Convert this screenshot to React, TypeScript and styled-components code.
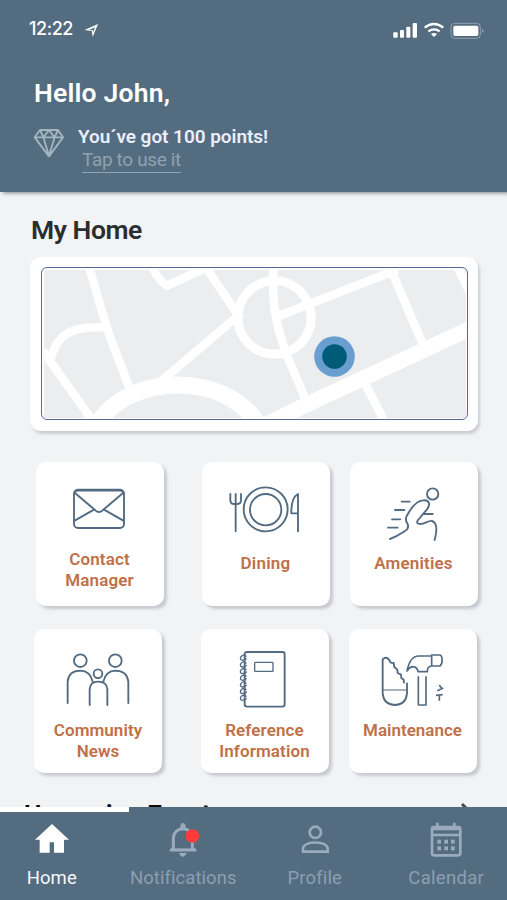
import React from 'react';
import styled, { createGlobalStyle } from 'styled-components';

const GlobalStyle = createGlobalStyle`
  * { box-sizing: border-box; }
  html, body { margin: 0; padding: 0; }
  body { font-family: Roboto, "Liberation Sans", sans-serif; background: #f1f3f5; }
  svg { display: block; }
`;

const Screen = styled.div`
  width: 507px;
  height: 900px;
  overflow: hidden;
  display: flex;
  flex-direction: column;
  background: #f1f3f5;
`;

const Header = styled.header`
  height: 192px;
  flex: none;
  background: #546c80;
  box-shadow: 3px 1px 4px rgba(60, 70, 80, 0.65);
`;

const StatusBar = styled.div`
  height: 58px;
  padding: 0 21px 0 29px;
  display: flex;
  align-items: center;
  color: #fff;
`;

const Clock = styled.span`
  font: 500 18px/22px Inter, sans-serif;
  letter-spacing: -0.45px;
  width: 55px;
`;

const LocationArrow = styled.svg`
  margin-top: 3px;
`;

const StatusIcons = styled.div`
  margin-left: auto;
  padding-top: 1px;
`;

const Greeting = styled.h1`
  margin: 19px 0 0 34px;
  font-size: 26.5px;
  line-height: 32px;
  font-weight: 600;
  letter-spacing: 0.2px;
  color: #fff;
`;

const Points = styled.div`
  display: flex;
  align-items: flex-start;
  margin: 15px 0 0 33px;
  & > svg { margin-top: 3px; }
`;

const PointsText = styled.div`
  margin-left: 14px;
`;

const PointsTitle = styled.div`
  margin-left: -1px;
  font-size: 19px;
  line-height: 25px;
  font-weight: 600;
  letter-spacing: -0.05px;
  color: #e9eeff;
`;

const PointsLink = styled.a`
  display: block;
  width: 99px;
  margin-left: 3px;
  height: 24px;
  font-size: 19px;
  line-height: 22px;
  letter-spacing: -0.35px;
  white-space: nowrap;
  color: #8fa2b2;
  border-bottom: 1px solid #91a6b5;
`;

const Content = styled.main`
  height: 615px;
  flex: none;
  overflow: hidden;
  padding-top: 22px;
`;

const SectionTitle = styled.h2<{ $dark?: boolean }>`
  margin: 0;
  font-size: 26.5px;
  line-height: 32px;
  font-weight: 600;
  letter-spacing: ${p => (p.$dark ? -0.5 : -0.45)}px;
  color: ${p => (p.$dark ? '#0b0b0b' : '#2b2d30')};
`;

const HomeTitle = styled(SectionTitle)`
  margin-left: 31px;
`;

const MapCard = styled.div`
  width: 448px;
  height: 174px;
  margin: 11px 0 31px 30px;
  padding: 10px 10px 11px 11px;
  border-radius: 11px;
  background: #fff;
  box-shadow: 2px 3px 3px rgba(90, 95, 105, 0.25);
`;

const MapFrame = styled.div`
  width: 427px;
  height: 153px;
  border: 1px solid #566799;
  border-radius: 6px;
  padding: 1.5px;
  overflow: hidden;
`;

const TileRow = styled.div<{ $left: number; $gap: number }>`
  display: flex;
  margin: 0 0 23px ${p => p.$left}px;
  & > :nth-child(2) { margin-left: ${p => p.$gap}px; }
  & > :nth-child(3) { margin-left: 20px; }
`;

const Tile = styled.button`
  width: 128px;
  height: 144px;
  flex: none;
  padding: 0;
  border: 0;
  border-radius: 10px;
  background: #fff;
  box-shadow: 3px 3px 3px rgba(90, 95, 110, 0.28);
  font-family: inherit;
  display: flex;
  flex-direction: column;
  align-items: center;
`;

const TileLabel = styled.span<{ $top: number; $spacing: number }>`
  margin-top: ${p => p.$top}px;
  font-size: 17px;
  line-height: 21px;
  font-weight: 600;
  letter-spacing: ${p => p.$spacing}px;
  white-space: pre-line;
  text-align: center;
  color: #bf7048;
`;

const EventsRow = styled.div`
  display: flex;
  align-items: flex-start;
  justify-content: space-between;
  padding: 2px 36px 0 24px;
`;

const NavBar = styled.nav`
  height: 93px;
  flex: none;
  background: #546c80;
`;

const ActiveStrip = styled.div`
  width: 129px;
  height: 5px;
  background: #fff;
`;

const NavItems = styled.div`
  display: grid;
  grid-template-columns: repeat(4, 131.5px);
  margin: 8px 0 0 -14px;
`;

const NavItem = styled.div<{ $active?: boolean; $spacing: number }>`
  display: flex;
  flex-direction: column;
  align-items: center;
  color: ${p => (p.$active ? '#fff' : '#9aabbd')};
  span {
    margin-top: 7px;
    font-size: 18.5px;
    line-height: 22px;
    letter-spacing: ${p => p.$spacing}px;
    color: ${p => (p.$active ? '#f5f9ff' : '#8b9fb1')};
  }
`;

const Line = styled.g`
  fill: none;
  stroke: #526b82;
  stroke-width: 5.6;
  stroke-linecap: round;
  stroke-linejoin: round;
`;

const TileArt = ({ box, children }: { box: string; children: React.ReactNode }) => (
  <svg width="128" height="85" viewBox={box}><Line>{children}</Line></svg>
);

const Envelope = () => (
  <TileArt box="33 36 384 255">
    <rect x="147" y="119" width="150" height="115" rx="12" />
    <path d="M149 128 L211 181 Q222 191 233 181 L295 128 Q292 122 284 122 H160 Q152 122 149 128 M149 212 L207 179 M295 212 L237 179" />
  </TileArt>
);

const Plate = () => (
  <TileArt box="35 36 384 255">
    <circle cx="226" cy="178" r="66" />
    <circle cx="226" cy="179" r="47" />
    <path d="M120 132 V151 Q121 162 131 162 H141 Q152 162 152 151 V132 M136 132 V244 M323 244 V132 Q302 143 303 190 H321" />
  </TileArt>
);

const Runner = () => (
  <TileArt box="29 36 384 255">
    <circle cx="277" cy="132" r="17" />
    <path d="M149 267 Q169 260 193 244 Q207 235 202 222 Q191 207 202 193 C212 175 226 152 248 151 C266 149 272 162 260 178 L233 210 Q225 222 241 222 C253 222 264 211 275 213 C289 218 291 240 283 270 M184 155 H208 M164 180 H192 M155 208 H180 M143 233 H172 M251 192 H277" />
  </TileArt>
);

const Family = () => (
  <TileArt box="29 26 384 255">
    <circle cx="168" cy="121" r="19" />
    <circle cx="273" cy="121" r="19" />
    <circle cx="221" cy="160" r="13" />
    <path d="M130 248 V184 Q133 151 168 151 Q198 152 205 184 M312 248 V184 Q308 151 273 151 Q244 152 237 184 M196 254 V206 Q198 184 221 184 Q247 184 249 206 V254" />
  </TileArt>
);

const Notebook = () => (
  <TileArt box="33 26 384 255">
    <rect x="164" y="95" width="120" height="164" rx="7" />
    <rect x="194" y="126" width="55" height="27" rx="2" strokeWidth="4" />
    {[113, 133, 153, 173, 193, 213, 233].map(y => (
      <path key={y} strokeWidth="4" d={`M168 ${y - 5} Q160 ${y - 12} 153 ${y - 4} Q148 ${y + 5} 157 ${y + 7} Q165 ${y + 7} 169 ${y + 2}`} />
    ))}
  </TileArt>
);

const Tools = () => (
  <TileArt box="28 26 384 255">
    <path d="M202 189 V219 Q199 253 166 254 Q132 253 129 219 V117 Q139 107 148 118 L153 127 L162 128 L164 140 L173 148 L174 158 L184 163 L185 173 L192 178 L193 187" />
    <path strokeWidth="3.6" d="M130 209 H201" />
    <path strokeWidth="5" strokeLinecap="butt" d="M202 152 Q211 107 237 107 H276 V137 Q263 138 263 154 H235 Q233 140 219 139 Q208 141 202 152 Z M276 104 H301 Q308 107 307 121 Q308 132 301 137 H276 Z M236 168 V254 H259 V168 M293 211 L311 203 M299 194 L306 205 M289 225 L309 223 M299 225 V241" />
  </TileArt>
);

const CityMap = () => (
  <svg width="422" height="148" viewBox="43.5 269.5 422 148">
    <rect x="43" y="269" width="424" height="150" rx="4" fill="#ecedef" />
    <g fill="none" stroke="#fff" strokeWidth="8.5">
      <path d="M88 264 Q98 301 109 335 L131 393 M50 360 C56 332 73 325 106 327 M42 350 L92 420" />
      <path d="M151 265 Q158 281 167 285 L204 268 M204 265 L238 315 L159 382" />
      <circle cx="274" cy="317" r="36.7" strokeWidth="9" />
      <path d="M273 265 C271 302 275 323 286 354 L306 401 M277 316 L397 269 M390 268 L422 343 M364 382 L385 423 M456 265 L469 291" />
      <path strokeWidth="17" d="M97 424 C125 374 225 368 259 426" />
      <path strokeWidth="15.5" d="M258 428 L300 407 L472 327" />
    </g>
    <circle cx="334" cy="356" r="20.3" fill="#689fd0" />
    <circle cx="334" cy="356" r="12.3" fill="#005b79" />
  </svg>
);

const DiamondIcon = () => (
  <svg width="32" height="32" viewBox="100 380 96 96" fill="none" stroke="#a3b5c1" strokeWidth="5.5" strokeLinejoin="round">
    <path d="M121 389 H175 L190 411 L148 468 L105 411 Z M105 411 H190 M121 389 L131 411 L148 389 L165 411 L175 389 M131 411 L148 466 L165 411" />
  </svg>
);

const SignalCluster = () => (
  <svg width="94" height="20" viewBox="417 57 282 60">
    <g fill="#fff">
      <rect x="421" y="94" width="13" height="16" rx="3" />
      <rect x="441" y="87" width="12" height="23" rx="3" />
      <rect x="460" y="77" width="12" height="33" rx="3" />
      <rect x="479" y="66" width="13" height="44" rx="3" />
      <path d="M534 99 Q543 93 552 99 L543 108 Z" />
      <rect x="601" y="74" width="75" height="31" rx="5" />
    </g>
    <path d="M515 80 Q543 58 571 80 M526 91 Q543 79 560 91" fill="none" stroke="#fff" strokeWidth="7" />
    <rect x="594" y="67" width="88" height="45" rx="11" fill="none" stroke="#91a2b0" strokeWidth="3" />
    <path d="M687 83 Q697 89 687 96 Z" fill="#91a2b0" />
  </svg>
);

const BellIcon = () => (
  <svg width="40" height="40" viewBox="493 121 120 120">
    <path d="M524 211 V176 Q525 149 553 147 Q580 149 581 176 V211 M514 211 H592" fill="none" stroke="currentColor" strokeWidth="9" />
    <path d="M511 214 L525 200 V207 H580 V200 L595 214 Z M543 149 L547 133 Q553 127 559 133 L563 149 Z M541 220 H564 Q559 231 552 231 Q545 231 541 220 Z" fill="currentColor" />
    <circle cx="581" cy="169" r="20.5" fill="#ff3c35" />
  </svg>
);

const HomeIcon = () => (
  <svg width="40" height="40" viewBox="96 121 120 120" fill="currentColor">
    <path d="M156 133 L207 180 H192 V219 H162 V188 H149 V219 H119 V180 H105 Z" />
  </svg>
);

const ProfileIcon = () => (
  <svg width="40" height="40" viewBox="126 121 120 120" fill="none" stroke="currentColor" strokeWidth="8">
    <circle cx="187" cy="158" r="17" />
    <path d="M150 216 V205 C156 183 217 183 224 205 V216 Z" />
  </svg>
);

const CalendarIcon = () => (
  <svg width="40" height="40" viewBox="520 121 120 120" fill="none" stroke="currentColor" strokeWidth="8">
    <rect x="538" y="142" width="85" height="85" rx="6" />
    <path d="M538 148 H623 M538 166 H623 M554 129 V144 M605 129 V144" />
    <g fill="currentColor" stroke="none">
      {[554, 575, 595].map(x => [180, 200].map(y => <rect key={`${x}-${y}`} x={x} y={y} width="11" height="12" />))}
    </g>
  </svg>
);

export default function App() {
  return (
    <>
      <GlobalStyle />
      <Screen>
        <Header>
          <StatusBar>
            <Clock>12:22</Clock>
            <LocationArrow width="15" height="15" viewBox="0 0 15 15">
              <path d="M0.5 7 L14 1 L8.7 14 L7.8 8 Z M5 6.9 L8.8 7.2 L9.1 9.3 L11 4.2 Z" fill="#fff" fillRule="evenodd" />
            </LocationArrow>
            <StatusIcons><SignalCluster /></StatusIcons>
          </StatusBar>
          <Greeting>Hello John,</Greeting>
          <Points>
            <DiamondIcon />
            <PointsText>
              <PointsTitle>You´ve got 100 points!</PointsTitle>
              <PointsLink>Tap to use it</PointsLink>
            </PointsText>
          </Points>
        </Header>
        <Content>
          <HomeTitle>My Home</HomeTitle>
          <MapCard><MapFrame><CityMap /></MapFrame></MapCard>
          <TileRow $left={35.5} $gap={38}>
            <Tile><Envelope /><TileLabel $top={2} $spacing={0.15}>{'Contact\nManager'}</TileLabel></Tile>
            <Tile><Plate /><TileLabel $top={6} $spacing={0.25}>Dining</TileLabel></Tile>
            <Tile><Runner /><TileLabel $top={6} $spacing={0.15}>Amenities</TileLabel></Tile>
          </TileRow>
          <TileRow $left={34} $gap={38.5}>
            <Tile><Family /><TileLabel $top={6} $spacing={0.05}>{'Community\nNews'}</TileLabel></Tile>
            <Tile><Notebook /><TileLabel $top={6} $spacing={0.12}>{'Reference\nInformation'}</TileLabel></Tile>
            <Tile><Tools /><TileLabel $top={6} $spacing={0}>Maintenance</TileLabel></Tile>
          </TileRow>
          <EventsRow>
            <SectionTitle $dark>Upcoming Events</SectionTitle>
            <svg width="12" height="20" viewBox="0 0 12 20"><path d="M3 6 L10 13" stroke="#444b50" strokeWidth="3" /></svg>
          </EventsRow>
        </Content>
        <NavBar>
          <ActiveStrip />
          <NavItems>
            <NavItem $active $spacing={0.1}><HomeIcon /><span>Home</span></NavItem>
            <NavItem $spacing={0.05}><BellIcon /><span>Notifications</span></NavItem>
            <NavItem $spacing={0.15}><ProfileIcon /><span>Profile</span></NavItem>
            <NavItem $spacing={0.3}><CalendarIcon /><span>Calendar</span></NavItem>
          </NavItems>
        </NavBar>
      </Screen>
    </>
  );
}
